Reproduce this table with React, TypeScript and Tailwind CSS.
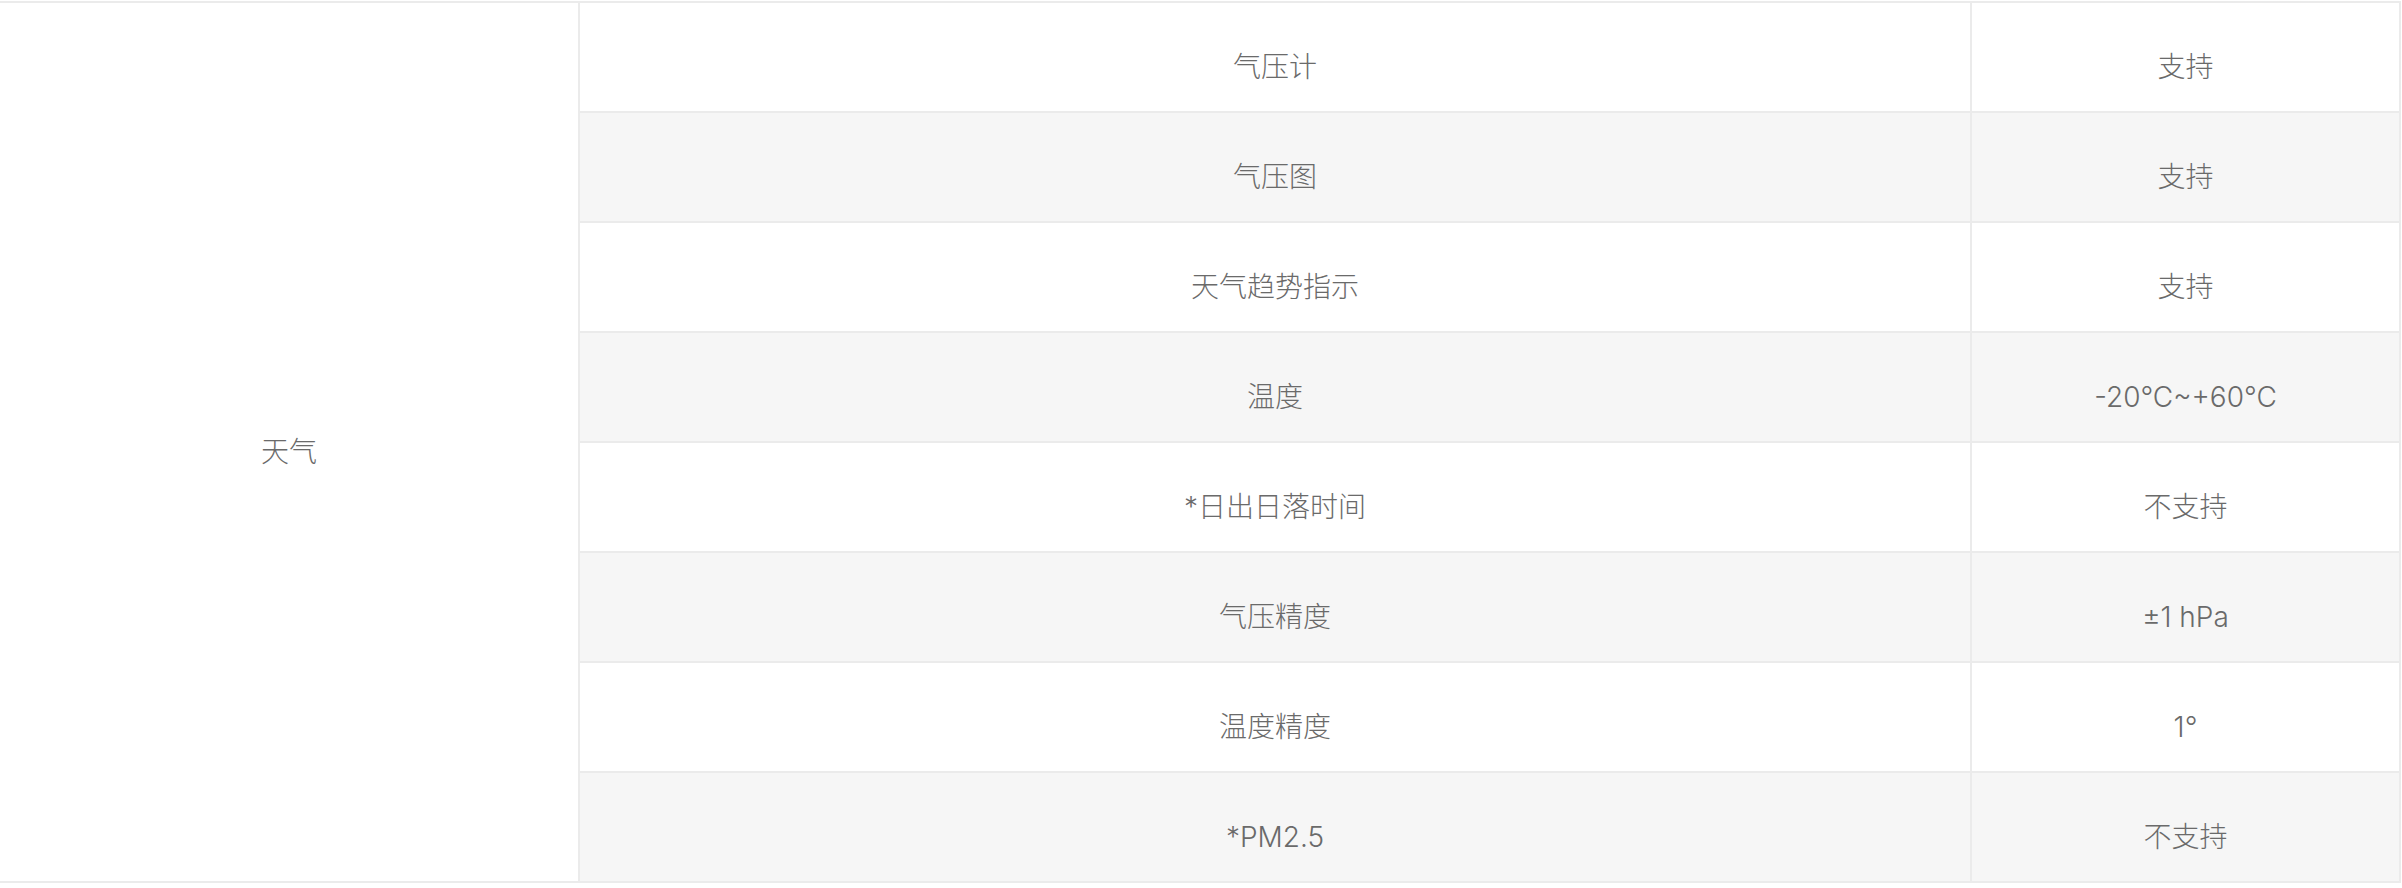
const ROWS: { name: string; value: string }[] = [
  { name: '气压计', value: '支持' },
  { name: '气压图', value: '支持' },
  { name: '天气趋势指示', value: '支持' },
  { name: '温度', value: '-20°C~+60°C' },
  { name: '*日出日落时间', value: '不支持' },
  { name: '气压精度', value: '±1 hPa' },
  { name: '温度精度', value: '1°' },
  { name: '*PM2.5', value: '不支持' },
];

export default function App() {
  return (
    <div className="w-[2402px] h-[888px] bg-white pt-px font-['Inter','Noto_Sans_CJK_SC',sans-serif] font-light text-[28px] text-[#6a6a6a]">
      {/* spec table */}
      <div className="w-[2401px] grid grid-cols-[580px_1392px_1fr] grid-rows-[repeat(8,110px)] border-t-2 border-r-2 border-[#ebebeb]">
        <div className="row-span-8 col-start-1 row-start-1 flex items-center justify-center pt-[20px] bg-white border-r-2 border-b-2 border-[#ebebeb]">
          天气
        </div>
        {ROWS.map((row, i) => (
          <div key={row.name} className="contents">
            <div
              className={`col-start-2 flex items-center justify-center pt-[20px] border-r-2 border-b-2 border-[#ebebeb] ${
                i % 2 === 1 ? 'bg-[#f6f6f6]' : 'bg-white'
              }`}
            >
              {row.name}
            </div>
            <div
              className={`col-start-3 flex items-center justify-center pt-[20px] border-b-2 border-[#ebebeb] ${
                i % 2 === 1 ? 'bg-[#f6f6f6]' : 'bg-white'
              }`}
            >
              {row.value}
            </div>
          </div>
        ))}
      </div>
    </div>
  );
}
